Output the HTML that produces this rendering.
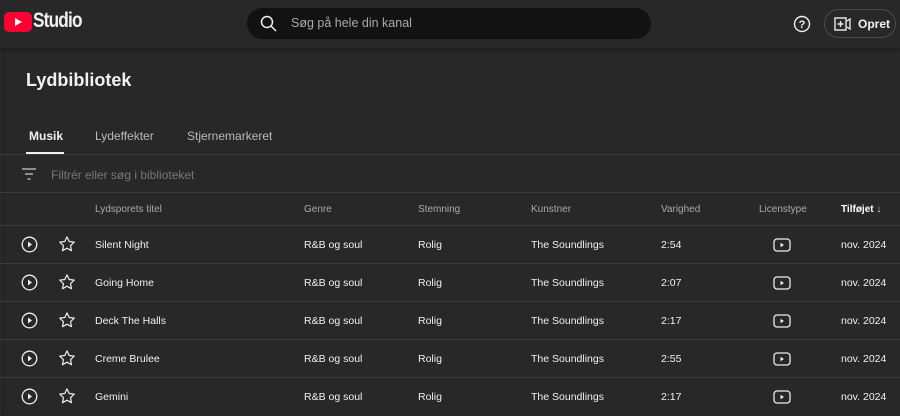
<!DOCTYPE html>
<html><head><style>
*{margin:0;padding:0;box-sizing:border-box}
body{width:900px;height:415px;overflow:hidden;background:#282828;font-family:"Liberation Sans",sans-serif;color:#f1f1f1;position:relative}
.top{position:absolute;left:0;top:0;width:900px;height:48px;background:#282828;box-shadow:0 2px 4px rgba(0,0,0,.35);z-index:2}
.abs{position:absolute}
.search{left:247px;top:8px;width:404px;height:31px;border-radius:16px;background:#121212}
.main{left:3px;top:48px;width:897px;height:367px;background:#282828;border-left:1px solid #1e1e1e}
.line{position:absolute;left:0;width:900px;height:1px;background:#3a3a3a}
.th{position:absolute;top:204px;font-size:10px;color:#aaa}
.row{position:absolute;left:0;width:900px;height:38px;font-size:10.5px}
.row span{position:absolute;top:13px}
</style></head><body>
<div class="top">
 <svg class="abs" style="left:4px;top:12px" width="28" height="20" viewBox="0 0 28 20"><rect x="0" y="0" width="28" height="20" rx="5" fill="#ff0033"/><path d="M11 6 L18 10 L11 14Z" fill="#fff"/></svg>
 <div class="abs" style="left:33px;top:9px;font-size:21px;font-weight:bold;letter-spacing:-1px;transform:scaleX(.82);transform-origin:left">Studio</div>
 <div class="abs search">
  <svg class="abs" style="left:13px;top:7px" width="17" height="17" viewBox="0 0 17 17"><circle cx="7" cy="7" r="5.5" stroke="#eee" stroke-width="1.5" fill="none"/><path d="M11 11l5 5" stroke="#eee" stroke-width="1.5"/></svg>
  <div class="abs" style="left:44px;top:8px;font-size:12.5px;color:#aaa">Søg på hele din kanal</div>
 </div>
 <svg class="abs" style="left:793px;top:15px" width="18" height="18" viewBox="0 0 18 18"><circle cx="9" cy="9" r="7.5" stroke="#eee" stroke-width="1.4" fill="none"/><text x="9" y="13" font-size="11" fill="#eee" text-anchor="middle" font-family="Liberation Sans" font-weight="bold">?</text></svg>
 <div class="abs" style="left:824px;top:9px;width:72px;height:29px;border:1px solid #4a4a4a;border-radius:15px">
  <svg class="abs" style="left:9px;top:7px" width="17" height="14" viewBox="0 0 17 14"><rect x="1" y="1" width="11" height="12" stroke="#eee" stroke-width="1.4" fill="none"/><path d="M6.5 4v6M3.5 7h6" stroke="#eee" stroke-width="1.4"/><path d="M13 4l3-2v10l-3-2" stroke="#eee" stroke-width="1.3" fill="none"/></svg>
  <div class="abs" style="left:33px;top:7px;font-size:12px;font-weight:bold">Opret</div>
 </div>
</div>
<div class="abs main"></div>
<div class="abs" style="left:26px;top:70px;font-size:18px;font-weight:bold">Lydbibliotek</div>
<div class="abs" style="left:29px;top:129px;font-size:12px;font-weight:bold">Musik</div>
<div class="abs" style="left:26px;top:152px;width:38px;height:2px;background:#f1f1f1"></div>
<div class="abs" style="left:95px;top:129px;font-size:12px;color:#bbb">Lydeffekter</div>
<div class="abs" style="left:187px;top:129px;font-size:12px;color:#bbb">Stjernemarkeret</div>
<div class="line" style="top:154px"></div>
<svg class="abs" style="left:22px;top:168px" width="14" height="12" viewBox="0 0 14 12"><path d="M0 1h14M3 6h8M5.5 11h3" stroke="#ccc" stroke-width="1.3"/></svg>
<div class="abs" style="left:51px;top:168px;font-size:12px;color:#777">Filtrér eller søg i biblioteket</div>
<div class="line" style="top:192px"></div>
<div class="th" style="left:95px">Lydsporets titel</div>
<div class="th" style="left:304px">Genre</div>
<div class="th" style="left:418px">Stemning</div>
<div class="th" style="left:531px">Kunstner</div>
<div class="th" style="left:661px">Varighed</div>
<div class="th" style="left:759px">Licenstype</div>
<div class="th" style="left:841px;color:#fff;font-weight:bold">Tilføjet <span style="font-weight:normal;color:#ccc">↓</span></div>
<div class="line" style="top:225px"></div>
<div class="line" style="top:263px"></div>
<div class="line" style="top:301px"></div>
<div class="line" style="top:339px"></div>
<div class="line" style="top:377px"></div>

<div id="rows"></div>
<script>
var d=[["Silent Night","2:54"],["Going Home","2:07"],["Deck The Halls","2:17"],["Creme Brulee","2:55"],["Gemini","2:17"]];
var h="";d.forEach(function(r,i){var t=226+i*38;
h+='<div class="row" style="top:'+t+'px">'+
'<svg style="position:absolute;left:21px;top:10px" width="17" height="17" viewBox="0 0 17 17"><circle cx="8.5" cy="8.5" r="7.3" stroke="#eee" stroke-width="1.3" fill="none"/><path d="M7 5.5l4 3-4 3z" fill="#eee"/></svg>'+
'<svg style="position:absolute;left:58px;top:9px" width="18" height="18" viewBox="0 0 24 24"><path d="M12 2.5l2.9 6.2 6.8.8-5 4.7 1.3 6.7L12 17.6l-6 3.3 1.3-6.7-5-4.7 6.8-.8z" stroke="#eee" stroke-width="1.6" fill="none" stroke-linejoin="round"/></svg>'+
'<span style="left:95px">'+r[0]+'</span><span style="left:304px">R&amp;B og soul</span><span style="left:418px">Rolig</span><span style="left:531px">The Soundlings</span><span style="left:661px">'+r[1]+'</span>'+
'<svg style="position:absolute;left:773px;top:12px" width="18" height="14" viewBox="0 0 18 14"><rect x="1" y="1" width="16" height="12" rx="3" stroke="#eee" stroke-width="1.3" fill="none"/><path d="M7.5 4.8l3.5 2.2-3.5 2.2z" fill="#eee"/></svg>'+
'<span style="left:841px">nov. 2024</span></div>';});
document.getElementById("rows").innerHTML=h;
</script>
</body></html>
